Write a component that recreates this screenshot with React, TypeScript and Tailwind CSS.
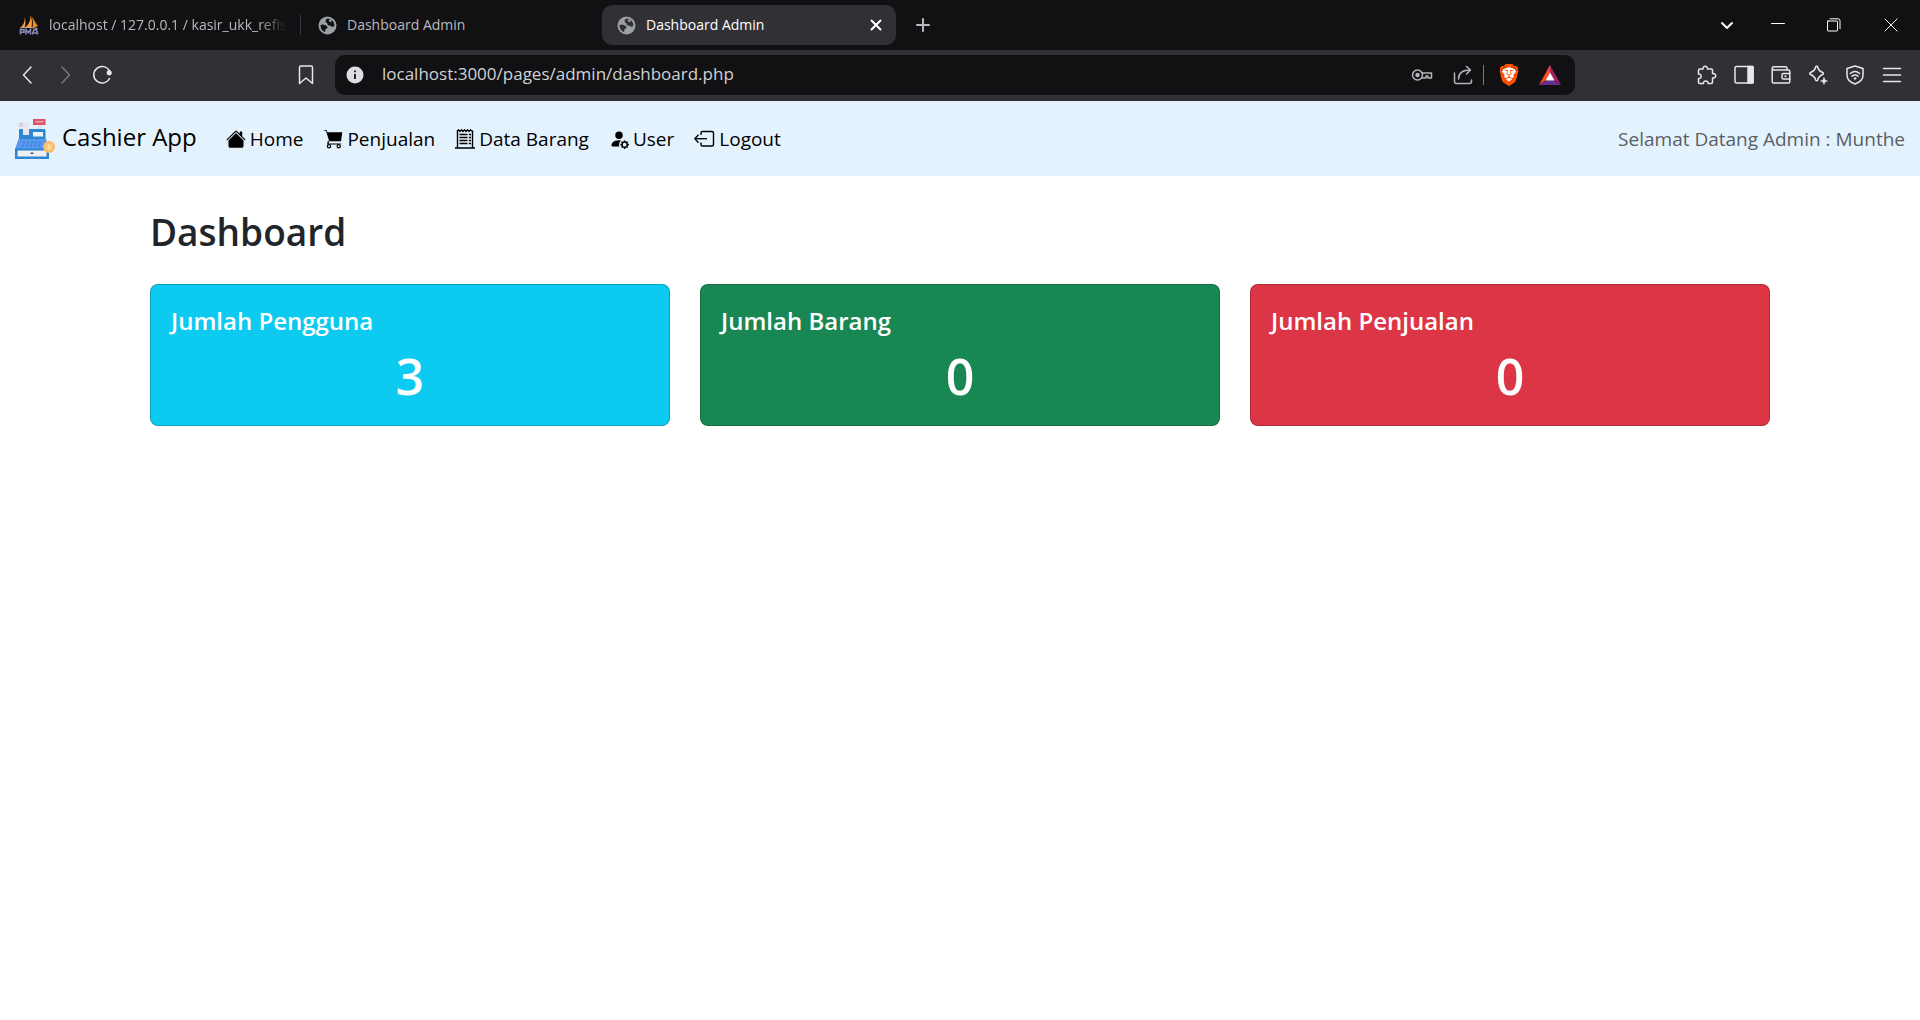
import React from "react";
import { SiBrave } from "react-icons/si";
import { BsHouseFill, BsPersonFillGear } from "react-icons/bs";

const SailIcon = () => (
  <svg width="20" height="20" viewBox="0 0 20 20" aria-hidden="true">
    <path d="M5.600 2.500C6 7 4.500 10 1.500 12.500L5.800 12C6.800 8.500 6.600 5 5.600 2.500Z" fill="#f0a24a" />
    <path d="M11.500 0.300C11.800 5.500 10 9.500 6.800 12L12.500 12.500C13.300 8 13 3.500 11.500 0.300Z" fill="#f9a13a" />
    <path d="M12.800 1.500C14.800 4.500 16.500 8 19 11L13.500 12.800C14.300 9 14 5 12.800 1.500Z" fill="#f58a10" />
    <path d="M1 13C7 12 13 12.400 18.500 13.400" stroke="#c9b9a0" fill="none" />
    <path d="M1.500 19.500V14.800h3.500v2.400H1.500M7 19.500v-4.700l2.200 2.700 2.200-2.700v4.700M13.300 19.500l1.700-4.700h2.500l1.200 4.700M14 18h4.500" stroke="#8488b4" strokeWidth="1.600" fill="none" />
  </svg>
);

const GlobeIcon = ({ land }: { land: string }) => (
  <svg width="19" height="19" viewBox="0 0 19 19" aria-hidden="true">
    <circle cx="9.500" cy="9.500" r="9" fill="#9aa0a6" />
    <path d="M9 3Q6.500 4 6.800 5.500 8.800 5.800 8.800 7.200 8.800 8.400 10.500 8.500 12 8.500 12.300 10 12.400 11.300 11 11.600 9.500 12 9.700 14 9.900 15.500 8.500 16.500 13 16.700 15 13.700 16.700 11 16 8L13.500 7.700Q12.300 7.600 12.300 6.300 12.400 5.200 13.700 4.300 11.800 2.700 9 3Z" fill={land} fillOpacity="0" />
    <path d="M9.500 2.500Q7.300 3.500 7.500 5.200 7.500 6.300 8.800 6.800 9.700 7.300 9.600 8.500 9.700 9.600 11.500 9.500 13.500 9.700 13.800 11L16.500 10Q16.700 7.200 14.800 5 13 2.800 9.500 2.500Z" fill={land} />
    <path d="M12.300 3.300Q14 4 13.700 5.300 13 6.500 11.800 5.800 10.500 5 10.800 4Z" fill="#9aa0a6" />
    <path d="M2.500 9Q5 8 7.300 9.300 9.500 9.700 9.500 11.500 9.300 12.700 8 12.800 7 13.300 7.200 16.200 2.600 14.500 2.500 9Z" fill={land} />
  </svg>
);

const CashRegister = () => (
  <svg width="40" height="40" viewBox="0 0 40 40" aria-hidden="true">
    <rect x="18" y="0" width="12.500" height="6" fill="#dc5468" />
    <rect x="20.500" y="2" width="8" height="1.500" fill="#eda3ae" />
    <rect x="23" y="6" width="3.500" height="5" fill="#dbe3ee" />
    <path d="M4 11q0-1 1-1h24q1.500 0 1.500 1.500V22H4Z" fill="#2f86d0" />
    <path d="M6 3h6.500q1.500 0 1.500 1.500V16H8V8H4V5q0-2 2-2Z" fill="#e6e6ec" />
    <path d="M4 5q0-2 2-2t2 2v3H4Z" fill="#d4d6de" />
    <rect x="18" y="13" width="10" height="4.500" fill="#e9f1fa" />
    <path d="M3.500 20h27.500L34 30H0Z" fill="#5898f0" />
    <path d="M8 23.500h20M7 26.500h20" stroke="#3d80d8" strokeWidth="1.500" strokeDasharray="2 2" />
    <path d="M0 29.500h34V40H0Z" fill="#2f86d0" />
    <rect x="2.500" y="31.500" width="29" height="6" fill="#eeeef3" />
    <rect x="15.500" y="33.500" width="3" height="1.500" fill="#555b68" />
    <circle cx="34" cy="28" r="6" fill="#fbbc63" />
    <circle cx="34" cy="28" r="3.500" fill="#fcc980" />
    <path d="M35.500 26.300c-3-.8-3.500 1.500-1.500 1.700s2 2.300-1.500 1.500M34 25v6" stroke="#fde0b0" fill="none" />
  </svg>
);

const CartIcon = () => (
  <svg width="20" height="20" viewBox="0 0 20 20" fill="none" stroke="currentColor" aria-hidden="true">
    <path d="M0 1h3.500l.8 2.300H19.300l-1.300 9H6.200L3 2Z" fill="currentColor" stroke="none" />
    <path d="M5.500 12 4.800 15h13" strokeWidth="1.200" />
    <circle cx="6" cy="17.200" r="1.600" fill="#e3f2fd" strokeWidth="1.200" />
    <circle cx="15.700" cy="17.200" r="1.600" fill="#e3f2fd" strokeWidth="1.200" />
  </svg>
);

const ReceiptIcon = () => (
  <svg width="20" height="20" viewBox="0 0 20 20" fill="none" stroke="currentColor" aria-hidden="true">
    <path d="M2.500 19V1.500M17.500 19V1.500M0 19h20" strokeWidth="1.400" />
    <path d="M2 2.500 3.500 .8 5 2.500 6.500 .8 8 2.500 9.500 .8 11 2.500 12.500 .8 14 2.500 15.500 .8 17.500 2.500" strokeWidth="1.200" />
    <path d="M4.500 5.500h8M4.500 8.500h8M4.500 11.500h8M4.500 14.500h8" strokeWidth="1.600" />
    <path d="M13.800 5.500H16M13.800 8.500H16M13.800 11.500H16M13.800 14.500H16" strokeWidth="1.600" />
  </svg>
);

const LogoutIcon = () => (
  <svg width="21" height="20" viewBox="0 0 21 20" fill="none" stroke="currentColor" aria-hidden="true">
    <path d="M7 6V4q0-1.500 1.500-1.500H18q1.500 0 1.500 1.500v11.500q0 1.500-1.500 1.500H8.500Q7 17 7 15.500v-2" strokeWidth="1.400" />
    <path d="M13 9.700H1" strokeWidth="1.400" />
    <path d="M4.500 5.700.8 9.700l3.700 4" strokeWidth="1.400" />
  </svg>
);

const Line = ({ children, w = 20, h = 20, sw = 1.5 }: { children: React.ReactNode; w?: number; h?: number; sw?: number }) => (
  <svg width={w} height={h} viewBox={`0 0 ${w} ${h}`} fill="none" stroke="currentColor" strokeWidth={sw} strokeLinecap="round" strokeLinejoin="round" aria-hidden="true">
    {children}
  </svg>
);

const toolbarIcons = [
  {
    label: "Extensions",
    icon: (
      <Line>
        <path d="M1.500 5.200Q1.500 4 2.700 4H6C5.500 .300 11 .300 10.500 4H14.300Q15.500 4 15.500 5.200V8.500C19.800 8 19.800 13.500 15.500 13V17.300Q15.500 18.500 14.300 18.500H11C11.500 15 6 15 6.500 18.500H2.700Q1.500 18.500 1.500 17.300V13.500C5 14 5 8.500 1.500 9Z" />
      </Line>
    ),
  },
  {
    label: "Sidebar",
    icon: (
      <Line>
        <rect x="1" y="1.500" width="18" height="16.500" rx="1.500" />
        <path d="M14 1.500h5V18h-5Z" fill="currentColor" />
      </Line>
    ),
  },
  {
    label: "Wallet",
    icon: (
      <Line>
        <path d="M1.200 3v13.500q0 1.500 1.500 1.500h14.600q1.500 0 1.500-1.500V6.500Q18.800 5 17.300 5H3Q1.200 5 1.200 3.300 1.200 1.800 3 1.800h11.500q1.500 0 1.500 1.500V5" />
        <path d="M18.800 8.500h-6.300q-1.500 0-1.500 1.500v2.500q0 1.500 1.500 1.500h6.300M14 11.300h1" />
      </Line>
    ),
  },
  {
    label: "Leo AI",
    icon: (
      <Line>
        <path d="M8.700 1.300c.5 0 .9.300 1 .7.600 3 2 4.400 5 5.500 1 .4 1 1.600 0 2-3 1.200-4.300 2.600-5 5.500-.3 1-1.600 1-2 0-.8-3-2.200-4.300-5.200-5.500-1-.4-1-1.600 0-2 3-1.100 4.500-2.500 5.200-5.500.1-.4.500-.7 1-.7Z" />
        <path d="M16 12.500l1 2.500 2.500 1-2.500 1-1 2.500-1-2.500-2.500-1 2.500-1Z" fill="currentColor" strokeWidth="0.500" />
      </Line>
    ),
  },
  {
    label: "VPN",
    icon: (
      <Line>
        <path d="M10 1 2 3.500V10c0 4.500 3.500 7.500 8 9 4.500-1.500 8-4.500 8-9V3.500Z" />
        <path d="M5.300 8.500c3-2.500 6.400-2.500 9.400 0M7 11.200c2-1.600 4-1.600 6 0" />
        <circle cx="10" cy="13.500" r="1" fill="currentColor" strokeWidth="0.500" />
      </Line>
    ),
  },
  {
    label: "Menu",
    icon: (
      <Line>
        <path d="M1.500 3.500h17M1.500 10h17M1.500 16.500h17" />
      </Line>
    ),
  },
];

const navLinks = [
  { label: "Home", icon: <BsHouseFill size={20} /> },
  { label: "Penjualan", icon: <CartIcon /> },
  { label: "Data Barang", icon: <ReceiptIcon /> },
  { label: "User", icon: <BsPersonFillGear size={20} /> },
  { label: "Logout", icon: <LogoutIcon /> },
];

const stats = [
  { title: "Jumlah Pengguna", value: 3, color: "bg-[#0dcaf0]" },
  { title: "Jumlah Barang", value: 0, color: "bg-[#198754]" },
  { title: "Jumlah Penjualan", value: 0, color: "bg-[#dc3545]" },
];

function TabStrip() {
  return (
    <div className="flex h-[50px] items-center bg-[#111113] text-[14px] text-[#b9b9bd]">
      <button className="flex h-10 w-[300px] shrink-0 items-center gap-2.5 pl-[19px] text-left">
        <SailIcon />
        <span className="w-[238px] overflow-hidden pb-0.5 whitespace-nowrap [mask-image:linear-gradient(to_right,black_88%,transparent)]">
          localhost / 127.0.0.1 / kasir_ukk_refis
        </span>
      </button>
      <span className="h-5 w-px shrink-0 bg-[#3a3a3e]" />
      <button className="flex h-10 w-[301px] shrink-0 items-center gap-2.5 pl-[17px] text-left">
        <GlobeIcon land="#111113" />
        <span className="pb-0.5">Dashboard Admin</span>
      </button>
      <div className="flex h-10 w-[294px] shrink-0 items-center rounded-[10px] bg-[#313035] pr-3.5 pl-[15px] text-white">
        <button className="flex flex-1 items-center gap-2.5 text-left">
          <GlobeIcon land="#313035" />
          <span className="pb-0.5">Dashboard Admin</span>
        </button>
        <button aria-label="Close tab">
          <Line w={12} h={12} sw={2}><path d="M1.500 1.500l9 9M10.500 1.500l-9 9" /></Line>
        </button>
      </div>
      <button aria-label="New tab" className="ml-5">
        <Line w={14} h={14} sw={2}><path d="M7 1v12M1 7h12" /></Line>
      </button>
      <div className="ml-auto flex items-center text-white">
        <button aria-label="Search tabs" className="mr-[37px]">
          <Line w={14} h={14} sw={2}><path d="M2 5l5 5 5-5" /></Line>
        </button>
        <button aria-label="Minimize" className="mr-[42px]">
          <Line w={14} h={14} sw={1}><path d="M.5 5.500h13" /></Line>
        </button>
        <button aria-label="Restore" className="mr-[43px]">
          <Line w={14} h={14} sw={1}>
            <rect x="0.500" y="3" width="10" height="10" rx="0.500" />
            <path d="M3 .8h8q2 0 2 2v8" />
          </Line>
        </button>
        <button aria-label="Close" className="mr-[22px]">
          <Line w={14} h={14} sw={1}><path d="M1 1l12 12M13 1L1 13" /></Line>
        </button>
      </div>
    </div>
  );
}

function Toolbar() {
  return (
    <div className="flex h-[51px] items-center bg-[#313035] pb-px text-[#e8e8ea]">
      <div className="flex w-[335px] shrink-0 items-center pl-5">
        <button aria-label="Back" className="mr-[18px]">
          <Line><path d="M11 2L3.500 10l7.500 8" /></Line>
        </button>
        <button aria-label="Forward" className="mr-[14px] text-[#77767b]">
          <Line><path d="M4 2l7.500 8L4 18" /></Line>
        </button>
        <button aria-label="Reload">
          <Line>
            <path d="M17.500 13.500A8.300 8.300 0 1 1 17.500 6" />
            <circle cx="17.200" cy="7.800" r="1.800" fill="currentColor" />
          </Line>
        </button>
        <button aria-label="Bookmark" className="mr-[19px] ml-auto">
          <Line><path d="M3.500 2.500Q3.500 1 5 1h10q1.500 0 1.500 1.500V18.500L10 13l-6.500 5.500Z" /></Line>
        </button>
      </div>
      <div className="flex h-10 min-w-0 flex-1 items-center rounded-[10px] bg-[#111113] pr-3.5 pl-[11px]">
        <button aria-label="Site information">
          <svg width="18" height="18" viewBox="0 0 18 18" aria-hidden="true">
            <circle cx="9" cy="9" r="8.500" fill="#dedde3" />
            <path d="M9 8v5M9 4.500v1.800" stroke="#111113" strokeWidth="1.800" />
          </svg>
        </button>
        <input
          aria-label="Address"
          defaultValue="localhost:3000/pages/admin/dashboard.php"
          className="ml-[18px] min-w-0 flex-1 bg-transparent pb-0.5 text-[17px] text-[#d2d2d6] outline-none"
        />
        <button aria-label="Passwords" className="mr-5 text-[#b5b5b9]">
          <Line w={22}>
            <circle cx="6.500" cy="10" r="5" />
            <circle cx="6.500" cy="10" r="1.500" fill="currentColor" />
            <path d="M11.300 8H20.500v5H17v-2h-2v2h-3.500" />
          </Line>
        </button>
        <button aria-label="Share" className="mr-2.5 text-[#b5b5b9]">
          <Line>
            <path d="M1.500 8v8.500q0 2 2 2h13q2 0 2-2V15M5.500 14c0-6 4-9 12-9M13.500 1.500l4 3.500-4 4" />
          </Line>
        </button>
        <span className="mr-3.5 h-5 w-px bg-[#77767b]" />
        <button aria-label="Brave Shields" className="mr-[19px]">
          <span className="flex rounded-full bg-[radial-gradient(circle,white_50%,transparent_52%)]">
            <SiBrave size={22} color="#ff4d00" />
          </span>
        </button>
        <button aria-label="Brave Rewards">
          <svg width="22" height="20" viewBox="0 0 22 20" aria-hidden="true">
            <path d="M11 0 0 20l7-5 4-6.500Z" fill="#ff4724" />
            <path d="M11 0 22 20l-7-5-4-6.500Z" fill="#9e1f63" />
            <path d="M0 20h22l-7-4.500H7Z" fill="#662d91" />
            <path d="M11 7.500 6.500 15.500h9Z" fill="#fff" />
          </svg>
        </button>
      </div>
      <div className="ml-[122px] flex shrink-0 items-center gap-[17px] pr-[18px]">
        {toolbarIcons.map((t) => (
          <button key={t.label} aria-label={t.label}>
            {t.icon}
          </button>
        ))}
      </div>
    </div>
  );
}

export default function App() {
  return (
    <div className="min-h-screen bg-white font-['Open_Sans',sans-serif] text-[#212529]">
      <header>
        <TabStrip />
        <Toolbar />
      </header>
      <nav className="flex h-[75px] items-center bg-[#e3f2fd] px-[15px] text-[19px] text-black">
        <a href="#" className="mr-[19px] flex items-center gap-[7px] text-[24px]">
          <CashRegister />
          <span className="pb-1">Cashier App</span>
        </a>
        {navLinks.map((l) => (
          <a key={l.label} href="#" className="flex items-center gap-1 px-2.5 pt-px">
            {l.icon}
            {l.label}
          </a>
        ))}
        <span className="ml-auto pt-px text-[#595f64]">Selamat Datang Admin : Munthe</span>
      </nav>
      <main className="mx-auto mt-8 max-w-[1650px] px-[15px]">
        <h1 className="mb-7 text-[37px] leading-[48px] font-semibold">Dashboard</h1>
        <div className="grid grid-cols-3 gap-[30px]">
          {stats.map((s) => (
            <section key={s.title} className={`rounded-lg border border-black/20 px-5 pt-[21px] pb-[19px] text-white ${s.color}`}>
              <h2 className="mb-2.5 text-[24px] leading-[30px] font-semibold">{s.title}</h2>
              <p className="text-center text-[50px] leading-[60px] font-semibold">{s.value}</p>
            </section>
          ))}
        </div>
      </main>
    </div>
  );
}
